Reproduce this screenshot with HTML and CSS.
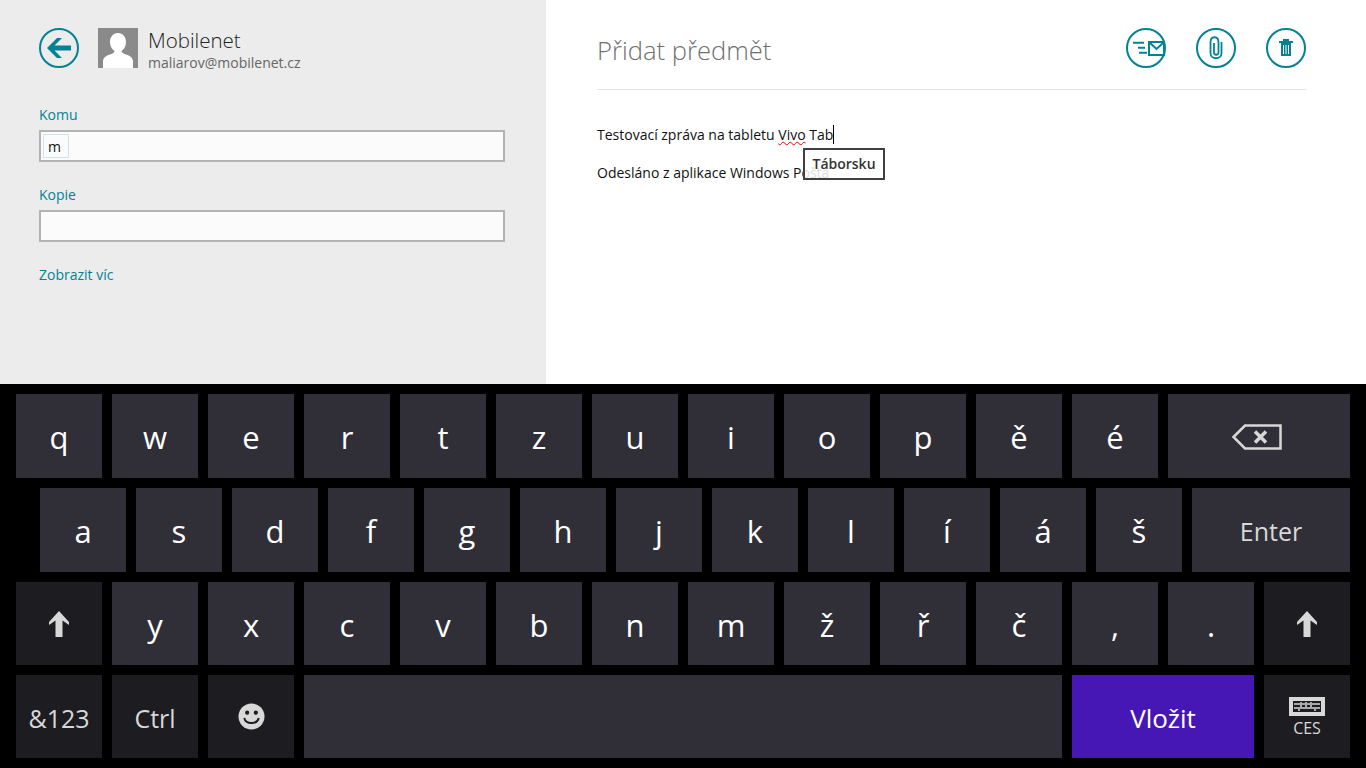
FILE: index.html
```html
<!DOCTYPE html>
<html lang="cs">
<head>
    <title>Pošta</title>
    <meta charset="utf-8">
    <link rel="stylesheet" href="styles.css">
</head>
<body>
    <div class="app">
        <div class="side">
            <div class="account">
                <svg class="round-btn back" viewBox="0 0 40 40">
                    <circle cx="20" cy="20" r="19" fill="none" stroke="#038296" stroke-width="2"/>
                    <path d="M8 20 L18 10 H23 L15.500 17.500 H32 V22.500 H15.500 L23 30 H18 Z" fill="#038296"/>
                </svg>
                <svg class="avatar" viewBox="0 0 40 40">
                    <rect width="40" height="40" fill="#8a8a8a"/>
                    <path d="M20 5 C15 5 12 9 12 14 C12 18 14 21.500 16.500 23 C16.500 24.500 15 25.500 12 26.500 C7 28 5.500 30 5 33 L5 40 L35 40 L35 33 C34.500 30 33 28 28 26.500 C25 25.500 23.500 24.500 23.500 23 C26 21.500 28 18 28 14 C28 9 25 5 20 5 Z" fill="#fff"/>
                </svg>
                <div class="account-text">
                    <div class="account-name">Mobilenet</div>
                    <div class="account-mail">maliarov@mobilenet.cz</div>
                </div>
            </div>
            <div class="field-label first">Komu</div>
            <div class="field"><span class="token">m</span></div>
            <div class="field-label">Kopie</div>
            <div class="field"></div>
            <div class="field-label more">Zobrazit víc</div>
        </div>
        <div class="compose">
            <div class="compose-head">
                <div class="subject">Přidat předmět</div>
                <div class="actions">
                    <svg class="round-btn" viewBox="0 0 40 40">
                        <circle cx="20" cy="20" r="19" fill="none" stroke="#038296" stroke-width="2"/>
                        <path d="M7 14.700 H18 M12 19.700 H19 M13 24.700 H21" stroke="#038296" stroke-width="2" fill="none"/>
                        <rect x="23" y="14" width="15" height="13" fill="none" stroke="#038296" stroke-width="2"/>
                        <path d="M23.500 14.500 L30.500 21 L37.500 14.500" fill="none" stroke="#038296" stroke-width="2"/>
                    </svg>
                    <svg class="round-btn" viewBox="0 0 40 40">
                        <circle cx="20" cy="20" r="19" fill="none" stroke="#038296" stroke-width="2"/>
                        <path d="M25.500 14 V25 C25.500 32 14.500 32 14.500 25 V14.500 C14.500 7.500 22.500 7.500 22.500 14.500 V24.500 C22.500 27.500 18 27.500 18 24.500 V15" fill="none" stroke="#038296" stroke-width="1.800"/>
                    </svg>
                    <svg class="round-btn" viewBox="0 0 40 40">
                        <circle cx="20" cy="20" r="19" fill="none" stroke="#038296" stroke-width="2"/>
                        <path d="M13 13 H27 V15 H13 Z M17 11 H23 V13 H17 Z" fill="#038296"/>
                        <rect x="15" y="15" width="10" height="13" fill="#038296"/>
                        <path d="M17.500 17 V26 M20 17 V26 M22.500 17 V26" stroke="#fff" stroke-width="1"/>
                    </svg>
                </div>
            </div>
            <div class="message">
                <p>Testovací zpráva na tabletu <span class="misspelled">Vivo</span> Tab<span class="caret"></span></p>
                <p>Odesláno z aplikace Windows Pošta</p>
                <div class="suggestion">Táborsku</div>
            </div>
        </div>
    </div>

    <div class="keyboard">
        <div class="row">
            <div class="key">q</div><div class="key">w</div><div class="key">e</div><div class="key">r</div>
            <div class="key">t</div><div class="key">z</div><div class="key">u</div><div class="key">i</div>
            <div class="key">o</div><div class="key">p</div><div class="key">ě</div><div class="key">é</div>
            <div class="key grow icon">
                <svg class="icon-back" viewBox="0 0 50 26">
                    <path d="M1.500 13 L13 1.500 H48.500 V24.500 H13 Z" fill="none" stroke="#d8d8d8" stroke-width="2.500"/>
                    <path d="M23 7.500 L34 18.500 M34 7.500 L23 18.500" stroke="#d8d8d8" stroke-width="3.500" fill="none"/>
                </svg>
            </div>
        </div>
        <div class="row indent">
            <div class="key">a</div><div class="key">s</div><div class="key">d</div><div class="key">f</div>
            <div class="key">g</div><div class="key">h</div><div class="key">j</div><div class="key">k</div>
            <div class="key">l</div><div class="key">í</div><div class="key">á</div><div class="key">š</div>
            <div class="key grow label">Enter</div>
        </div>
        <div class="row short">
            <div class="key dark icon"><svg class="icon-shift" viewBox="0 0 22 28"><path d="M11 1 L21 12 L21 15 L14.500 10.500 V27 H7.500 V10.500 L1 15 L1 12 Z" fill="#d8d8d8"/></svg></div>
            <div class="key">y</div><div class="key">x</div><div class="key">c</div><div class="key">v</div>
            <div class="key">b</div><div class="key">n</div><div class="key">m</div><div class="key">ž</div>
            <div class="key">ř</div><div class="key">č</div><div class="key">,</div><div class="key">.</div>
            <div class="key dark icon"><svg class="icon-shift" viewBox="0 0 22 28"><path d="M11 1 L21 12 L21 15 L14.500 10.500 V27 H7.500 V10.500 L1 15 L1 12 Z" fill="#d8d8d8"/></svg></div>
        </div>
        <div class="row short">
            <div class="key dark label">&amp;123</div>
            <div class="key dark label">Ctrl</div>
            <div class="key dark icon">
                <svg class="icon-smile" viewBox="0 0 28 28">
                    <circle cx="14" cy="14" r="13.500" fill="#d8d8d8"/>
                    <circle cx="9.500" cy="10" r="2.200" fill="#1d1d21"/>
                    <circle cx="18.500" cy="10" r="2.200" fill="#1d1d21"/>
                    <path d="M6.500 15.500 C8 22.500 20 22.500 21.500 15.500" fill="none" stroke="#1d1d21" stroke-width="2"/>
                </svg>
            </div>
            <div class="key space"></div>
            <div class="key insert">Vložit</div>
            <div class="key dark lang">
                <svg class="icon-kbd" viewBox="0 0 36 19">
                    <rect width="36" height="19" fill="#d8d8d8"/>
                    <path d="M4 4 H32 V15 H4 Z" fill="#1d1d21"/>
                    <path d="M5 7 H31 M5 11 H31 M12 5 V6 M17 5 V6 M22 5 V6 M12 8 V10 M17 8 V10 M22 8 V10 M10 12 V14 M26 12 V14" stroke="#d8d8d8" stroke-width="1.500"/>
                </svg>
                <span>CES</span>
            </div>
        </div>
    </div>
</body>
</html>
```

FILE: styles.css
```css
html, body {
    margin: 0;
    padding: 0;
    height: 768px;
    overflow: hidden;
    background: #000;
    font-family: "Open Sans", "Noto Sans", "Liberation Sans", sans-serif;
}

.app {
    display: flex;
    height: 384px;
    background: #fff;
}

.side {
    width: 546px;
    box-sizing: border-box;
    padding: 28px 41px 0 39px;
    background: #ececec;
}
.account {
    display: flex;
    height: 40px;
}
.round-btn {
    width: 40px;
    height: 40px;
    display: block;
}
.avatar {
    width: 40px;
    height: 40px;
    margin-left: 19px;
}
.account-text {
    margin-left: 10px;
}
.account-name {
    font-size: 20.5px;
    font-weight: 300;
    line-height: 25px;
    color: #222;
}
.account-mail {
    margin-top: 1px;
    font-size: 14px;
    line-height: 18px;
    color: #666;
}
.field-label {
    margin-top: 23px;
    height: 19px;
    font-size: 14px;
    line-height: 19px;
    color: #038296;
}
.field-label.first {
    margin-top: 37px;
}
.field {
    height: 32px;
    margin-top: 6px;
    box-sizing: border-box;
    border: 2px solid #b3b3b3;
    background: #fbfbfb;
    padding: 2px;
}
.token {
    display: block;
    width: 26px;
    height: 24px;
    box-sizing: border-box;
    border: 1px solid #cfe4ea;
    font-size: 14px;
    line-height: 23px;
    padding-left: 4px;
    color: #111;
}

.compose {
    flex: 1;
    padding: 28px 60px 0 51px;
}
.compose-head {
    display: flex;
    justify-content: space-between;
    height: 61px;
    border-bottom: 1px solid #e4e4e4;
}
.subject {
    font-size: 25.6px;
    font-weight: 300;
    line-height: 45px;
    color: #707070;
}
.actions {
    display: flex;
    gap: 30px;
}
.message {
    position: relative;
    padding-top: 35px;
    font-size: 14px;
    line-height: 20px;
    color: #111;
}
.message p {
    margin: 0 0 18px;
}
.misspelled {
    text-decoration: underline wavy #f00000 1px;
}
.caret {
    display: inline-block;
    width: 1px;
    height: 19px;
    background: #000;
    vertical-align: -4px;
}
.suggestion {
    position: absolute;
    left: 206px;
    top: 58px;
    width: 82px;
    height: 32px;
    box-sizing: border-box;
    border: 2px solid #404040;
    background: rgba(255, 255, 255, 0.85);
    font-size: 14px;
    font-weight: 600;
    line-height: 28px;
    text-align: center;
    color: #333;
}

.keyboard {
    height: 384px;
    box-sizing: border-box;
    padding: 10px 16px 0;
    background: #000;
    display: flex;
    flex-direction: column;
    gap: 10px;
}
.row {
    display: flex;
    gap: 10px;
    height: 84px;
}
.row.short {
    height: 83px;
}
.row.indent {
    padding-left: 24px;
}
.key {
    width: 86px;
    box-sizing: border-box;
    padding-top: 2px;
    flex: none;
    background: #302f38;
    color: #fff;
    font-size: 31px;
    display: flex;
    align-items: center;
    justify-content: center;
}
.key.grow {
    flex: 1;
}
.key.icon {
    padding-top: 0;
}
.key.label {
    padding-top: 2px;
    font-size: 25px;
    color: #d8d8d8;
}
.key.dark {
    background: #1d1d21;
}
.key.space {
    width: 758px;
}
.key.insert {
    width: 182px;
    padding-top: 2px;
    background: #4617b4;
    font-size: 26px;
}
.key.lang {
    flex-direction: column;
    padding-top: 2px;
    font-size: 16px;
    color: #d8d8d8;
}
.lang span {
    margin-top: 1px;
}
.icon-back {
    width: 50px;
    height: 26px;
    margin: 2px 5px 0 0;
}
.icon-shift {
    width: 22px;
    height: 28px;
}
.icon-smile {
    width: 27px;
    height: 27px;
}
.icon-kbd {
    width: 36px;
    height: 19px;
}
```
